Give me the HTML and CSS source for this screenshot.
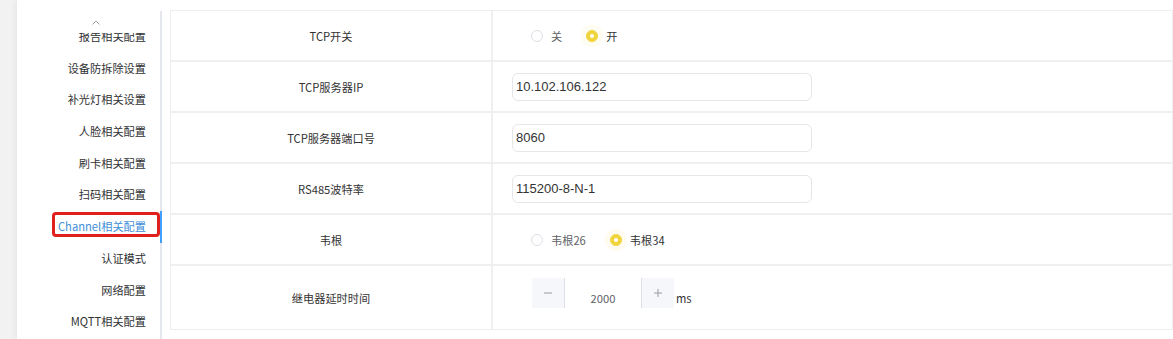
FILE: index.html
```html
<!DOCTYPE html>
<html>
<head>
    <meta charset="UTF-8">
    <title>设备配置</title>
    <link rel="stylesheet" href="styles.css">
</head>
<body>
    <div class="panel">
        <div class="tabs">
            <div class="tabs-prev">
                <svg width="8" height="5" viewBox="0 0 8 5"><path d="M0.5 4.5 L4 1 L7.5 4.5" fill="none" stroke="#a0a0a0" stroke-width="1"/></svg>
            </div>
            <div class="tabs-scroll">
                <div class="tabs-list">
                    <div class="tab-item">报告相关配置</div>
                    <div class="tab-item">设备防拆除设置</div>
                    <div class="tab-item">补光灯相关设置</div>
                    <div class="tab-item">人脸相关配置</div>
                    <div class="tab-item">刷卡相关配置</div>
                    <div class="tab-item">扫码相关配置</div>
                    <div class="tab-item active">Channel相关配置<span class="mark"></span></div>
                    <div class="tab-item">认证模式</div>
                    <div class="tab-item">网络配置</div>
                    <div class="tab-item">MQTT相关配置</div>
                </div>
            </div>
        </div>

        <div class="config-table">
            <div class="row">
                <div class="cell-label">TCP开关</div>
                <div class="cell-value">
                    <div class="radio-group">
                        <label class="radio"><span class="radio-inner"></span><span class="radio-label">关</span></label>
                        <label class="radio checked"><span class="radio-inner"></span><span class="radio-label">开</span></label>
                    </div>
                </div>
            </div>
            <div class="row">
                <div class="cell-label">TCP服务器IP</div>
                <div class="cell-value"><input class="text-input" value="10.102.106.122"></div>
            </div>
            <div class="row">
                <div class="cell-label">TCP服务器端口号</div>
                <div class="cell-value"><input class="text-input" value="8060"></div>
            </div>
            <div class="row">
                <div class="cell-label">RS485波特率</div>
                <div class="cell-value"><input class="text-input" value="115200-8-N-1"></div>
            </div>
            <div class="row">
                <div class="cell-label">韦根</div>
                <div class="cell-value">
                    <div class="radio-group">
                        <label class="radio"><span class="radio-inner"></span><span class="radio-label">韦根26</span></label>
                        <label class="radio checked"><span class="radio-inner"></span><span class="radio-label">韦根34</span></label>
                    </div>
                </div>
            </div>
            <div class="row row-tall">
                <div class="cell-label">继电器延时时间</div>
                <div class="cell-value">
                    <div class="stepper">
                        <span class="step-btn step-minus">
                            <svg width="10" height="10" viewBox="0 0 10 10"><path d="M1 5 H9" stroke="#9a9ca2" stroke-width="1"/></svg>
                        </span>
                        <span class="step-value">2000</span>
                        <span class="step-btn step-plus">
                            <svg width="10" height="10" viewBox="0 0 10 10"><path d="M1 5 H9 M5 1 V9" stroke="#9a9ca2" stroke-width="1"/></svg>
                        </span>
                        <span class="unit">ms</span>
                    </div>
                </div>
            </div>
        </div>
    </div>
</body>
</html>
```

FILE: styles.css
```css
body {
    margin: 0;
    background: #f2f2f2;
    font-family: "Noto Sans CJK SC", "Noto Sans", sans-serif;
    font-size: 11.2px;
    color: #333;
}
.panel {
    margin-left: 17px;
    height: 100vh;
    background: #fff;
    display: flex;
    align-items: flex-start;
    padding-left: 15px;
    box-shadow: -2px 0 6px rgba(0,0,0,0.05);
}
.tabs {
    width: 128px;
    flex-shrink: 0;
    margin-top: 11px;
    height: calc(100vh - 11px);
    border-right: 2px solid #e4e7ed;
    display: flex;
    flex-direction: column;
}
.tabs-prev {
    height: 22px;
    display: flex;
    align-items: center;
    justify-content: center;
}
.tabs-scroll {
    flex: 1;
    overflow: hidden;
    margin-right: -2px;
}
.tabs-list {
    margin-top: -12px;
}
.tab-item {
    position: relative;
    height: 31.7px;
    line-height: 31.7px;
    text-align: right;
    padding-right: 14px;
    border-right: 2px solid transparent;
    color: #303133;
    white-space: nowrap;
}
.tab-item.active {
    color: #3f8fd8;
    border-right-color: #409eff;
}
.mark {
    position: absolute;
    left: 20px;
    right: 0;
    top: 1px;
    height: 25px;
    border: 3px solid #e0201d;
    border-radius: 4px;
    box-sizing: border-box;
}
.config-table {
    flex: 1;
    margin-left: 8px;
    margin-top: 10px;
    border: 1px solid #eeeeee;
}
.row {
    display: flex;
    height: 51px;
    box-sizing: border-box;
    border-bottom: 2px solid #efefef;
}
.row-tall {
    height: 63px;
    border-bottom: none;
}
.cell-label {
    width: 322px;
    box-sizing: border-box;
    border-right: 2px solid #efefef;
    display: flex;
    align-items: center;
    justify-content: center;
    color: #333;
}
.cell-value {
    flex: 1;
    display: flex;
    align-items: center;
    padding-left: 19px;
}
.text-input {
    width: 300px;
    height: 28px;
    box-sizing: border-box;
    border: 1px solid #e6e6e6;
    border-radius: 6px;
    padding: 0 3px;
    font-family: "Liberation Sans", Arial, sans-serif;
    font-size: 13px;
    color: #333;
    outline: none;
}
.radio-group {
    display: flex;
    margin-left: 19px;
}
.radio {
    display: inline-flex;
    align-items: center;
    margin-right: 24px;
}
.radio-inner {
    position: relative;
    width: 12px;
    height: 12px;
    box-sizing: border-box;
    border: 1px solid #dcdfe6;
    border-radius: 50%;
    background: #fff;
}
.radio-label {
    padding-left: 8px;
    color: #606266;
}
.radio.checked .radio-inner {
    background: #f0d43c;
    border-color: #f0d43c;
    box-shadow: 0 0 0 5px rgba(240,212,60,0.08);
}
.radio.checked .radio-inner:after {
    content: "";
    position: absolute;
    width: 4px;
    height: 4px;
    border-radius: 50%;
    background: #fff;
    left: 3px;
    top: 3px;
}
.radio.checked .radio-label {
    color: #333;
}
.stepper {
    display: flex;
    align-items: flex-start;
    height: 40px;
    margin-left: 20px;
}
.step-btn {
    width: 33px;
    height: 30px;
    box-sizing: border-box;
    background: #f5f7fa;
    display: flex;
    align-items: center;
    justify-content: center;
}
.step-minus {
    border-right: 1px solid #dcdfe6;
}
.step-plus {
    border-left: 1px solid #dcdfe6;
}
.step-value {
    width: 76px;
    line-height: 40px;
    text-align: center;
    color: #606266;
}
.unit {
    line-height: 40px;
    margin-left: 2px;
    color: #333;
}
```
